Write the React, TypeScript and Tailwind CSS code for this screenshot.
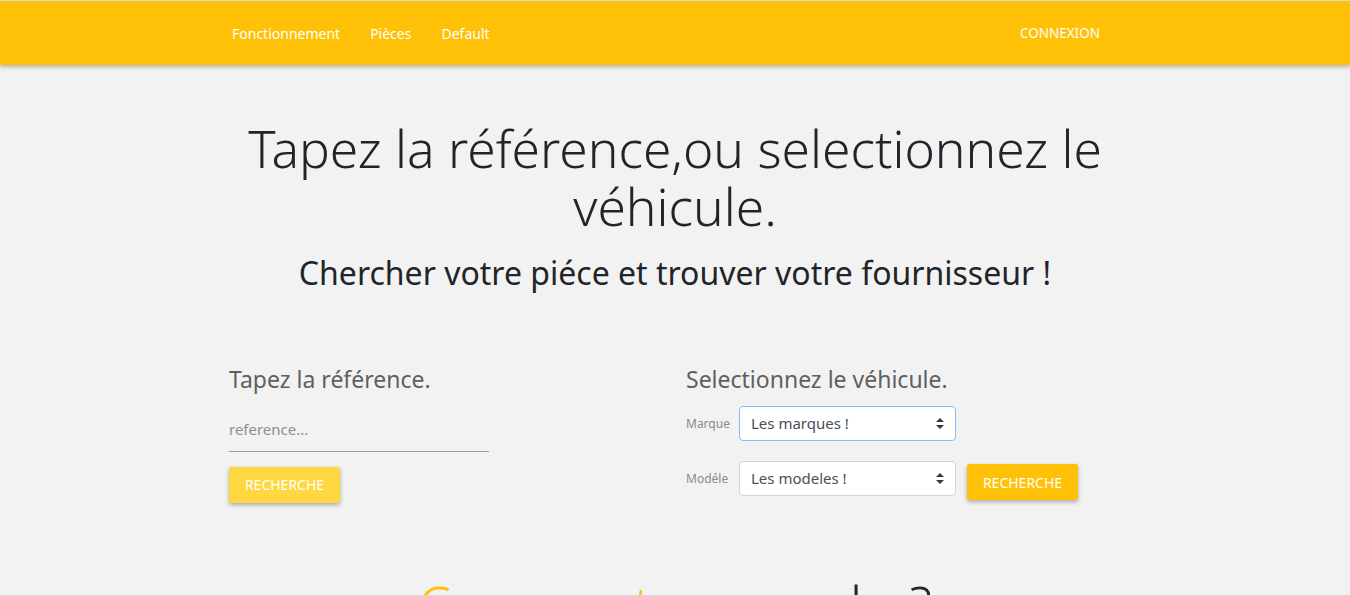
import React from "react";

const font = { fontFamily: '"Noto Sans", "Open Sans", sans-serif' };

function SelectArrows() {
  return (
    <svg width="8" height="11" viewBox="0 0 8 11" className="shrink-0">
      <polygon points="4,0 8,4 0,4" fill="#343a40" />
      <polygon points="0,7 8,7 4,11" fill="#343a40" />
    </svg>
  );
}

function FakeSelect({ label, text, focused }: { label: string; text: string; focused?: boolean }) {
  return (
    <div className="flex items-center">
      <span className="w-[53px] text-[12px] text-[#8a8a8a]">{label}</span>
      <div
        className={
          focused
            ? "flex h-[35px] w-[217px] items-center justify-between rounded-[4px] border border-[#80bdff] bg-white pl-[11px] pr-[11px] text-[15px] text-[#495057]"
            : "flex h-[35px] w-[217px] items-center justify-between rounded-[4px] border border-[#d4d4d4] bg-white pl-[11px] pr-[11px] text-[15px] text-[#495057]"
        }
      >
        <span>{text}</span>
        <SelectArrows />
      </div>
    </div>
  );
}

export default function App() {
  return (
    <div className="h-[596px] overflow-hidden border-t border-b border-[#d9d9d9] bg-[#f2f2f2]" style={font}>
      <nav className="relative z-10 h-[64px] bg-[#ffc107] shadow-[0_2px_4px_rgba(0,0,0,0.25)]">
        <div className="flex h-full items-center pl-[232px] pr-[250px] text-[14px] text-white">
          <div className="flex items-center gap-[30px]">
            <a>Fonctionnement</a>
            <a>Pièces</a>
            <a>Default</a>
          </div>
          <a className="ml-auto text-[13.5px] uppercase">Connexion</a>
        </div>
      </nav>

      <div className="mx-auto w-[900px] text-center text-[#212529]">
        <h1 className="mt-[54px] text-[51.5px] font-light leading-[58px]">
          Tapez la référence,ou selectionnez le
          <br />
          véhicule.
        </h1>
        <h2 className="mt-[18px] text-[32px] leading-[40px]">
          Chercher votre piéce et trouver votre fournisseur !
        </h2>
      </div>

      <div className="mx-auto mt-[71px] grid w-[900px] grid-cols-2">
        <div className="pl-[4px]">
          <h4 className="text-[23px] leading-[30px] text-[#606060]">Tapez la référence.</h4>
          <div className="mt-[24px] w-[260px] border-b border-[#9a9a9a] pb-[10px] text-[15px] text-[#8f8f8f]">
            reference...
          </div>
          <button className="mt-[15px] h-[36px] w-[111px] rounded-[2px] bg-[#ffd740] text-[14px] uppercase text-white shadow-[0_2px_4px_rgba(0,0,0,0.3)]">
            Recherche
          </button>
        </div>
        <div className="pl-[11px]">
          <h4 className="text-[23px] leading-[30px] text-[#606060]">Selectionnez le véhicule.</h4>
          <div className="mt-[12px]">
            <FakeSelect label="Marque" text="Les marques !" focused />
          </div>
          <div className="mt-[20px] flex items-start">
            <FakeSelect label="Modéle" text="Les modeles !" />
            <button className="ml-[11px] mt-[3px] h-[36px] w-[111px] rounded-[2px] bg-[#ffc107] text-[14px] uppercase text-white shadow-[0_2px_4px_rgba(0,0,0,0.3)]">
              Recherche
            </button>
          </div>
        </div>
      </div>

      <h2 className="mt-[71px] text-center text-[52px] font-light leading-[60px] text-[#212529]">
        <span className="text-[#ffc107]">Comment</span> ça marche?
      </h2>
    </div>
  );
}
